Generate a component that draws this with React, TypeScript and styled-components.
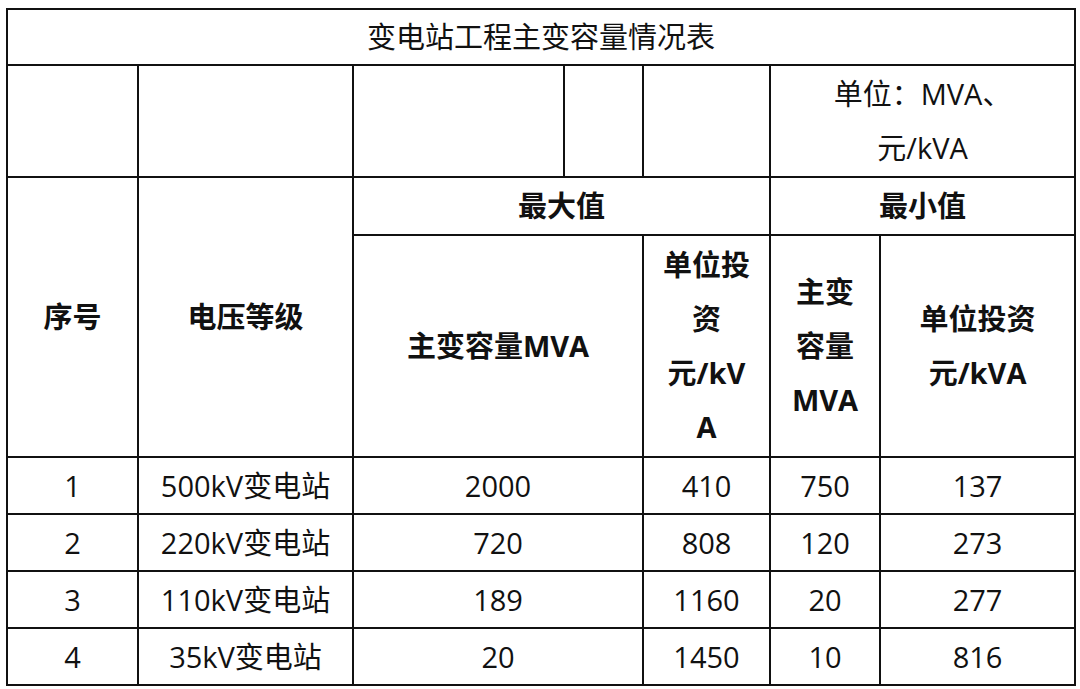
import React from 'react';
import styled, { createGlobalStyle } from 'styled-components';

const GlobalStyle = createGlobalStyle`
	html, body {
		margin: 0;
		padding: 0;
		background: #fff;
	}
	body {
		font-family: 'Open Sans', 'Noto Sans CJK SC', sans-serif;
		color: #111;
	}
`;

const Page = styled.div`
	padding: 8px 0 0 6px;
`;

const Sheet = styled.table`
	border-collapse: collapse;
	table-layout: fixed;
	width: 1068px;
	border: 2px solid #111;
`;

const Row = styled.tr<{ $h: number }>`
	height: ${(p) => p.$h}px;
`;

const Cell = styled.td<{ $bold?: boolean }>`
	border: 2px solid #111;
	padding: 0 2px;
	font-size: 29px;
	line-height: 54px;
	font-weight: ${(p) => (p.$bold ? 700 : 400)};
	text-align: center;
	vertical-align: middle;
	white-space: nowrap;
	overflow: hidden;
`;

const TitleCell = styled(Cell)`
	line-height: 52px;
`;

interface Station {
	no: number;
	name: string;
	maxCap: number;
	maxCost: number;
	minCap: number;
	minCost: number;
}

const stations: Station[] = [
	{ no: 1, name: '500kV变电站', maxCap: 2000, maxCost: 410, minCap: 750, minCost: 137 },
	{ no: 2, name: '220kV变电站', maxCap: 720, maxCost: 808, minCap: 120, minCost: 273 },
	{ no: 3, name: '110kV变电站', maxCap: 189, maxCost: 1160, minCap: 20, minCost: 277 },
	{ no: 4, name: '35kV变电站', maxCap: 20, maxCost: 1450, minCap: 10, minCost: 816 },
];

const colWidths = [131, 215, 211, 79, 127, 110, 195];

export default function App() {
	return (
		<Page>
			<GlobalStyle />
			<Sheet>
				<colgroup>
					{colWidths.map((w, i) => (
						<col key={i} style={{ width: w }} />
					))}
				</colgroup>
				<tbody>
					<Row $h={56}>
						<TitleCell colSpan={7}>变电站工程主变容量情况表</TitleCell>
					</Row>
					<Row $h={112}>
						<Cell />
						<Cell />
						<Cell />
						<Cell />
						<Cell />
						<Cell colSpan={2}>
							单位：MVA、
							<br />
							元/kVA
						</Cell>
					</Row>
					<Row $h={58}>
						<Cell $bold rowSpan={2}>
							序号
						</Cell>
						<Cell $bold rowSpan={2}>
							电压等级
						</Cell>
						<Cell $bold colSpan={3}>
							最大值
						</Cell>
						<Cell $bold colSpan={2}>
							最小值
						</Cell>
					</Row>
					<Row $h={222}>
						<Cell $bold colSpan={2}>
							主变容量MVA
						</Cell>
						<Cell $bold>
							单位投
							<br />
							资
							<br />
							元/kV
							<br />A
						</Cell>
						<Cell $bold>
							主变
							<br />
							容量
							<br />
							MVA
						</Cell>
						<Cell $bold>
							单位投资
							<br />
							元/kVA
						</Cell>
					</Row>
					{stations.map((s) => (
						<Row $h={57} key={s.no}>
							<Cell>{s.no}</Cell>
							<Cell>{s.name}</Cell>
							<Cell colSpan={2}>{s.maxCap}</Cell>
							<Cell>{s.maxCost}</Cell>
							<Cell>{s.minCap}</Cell>
							<Cell>{s.minCost}</Cell>
						</Row>
					))}
				</tbody>
			</Sheet>
		</Page>
	);
}
